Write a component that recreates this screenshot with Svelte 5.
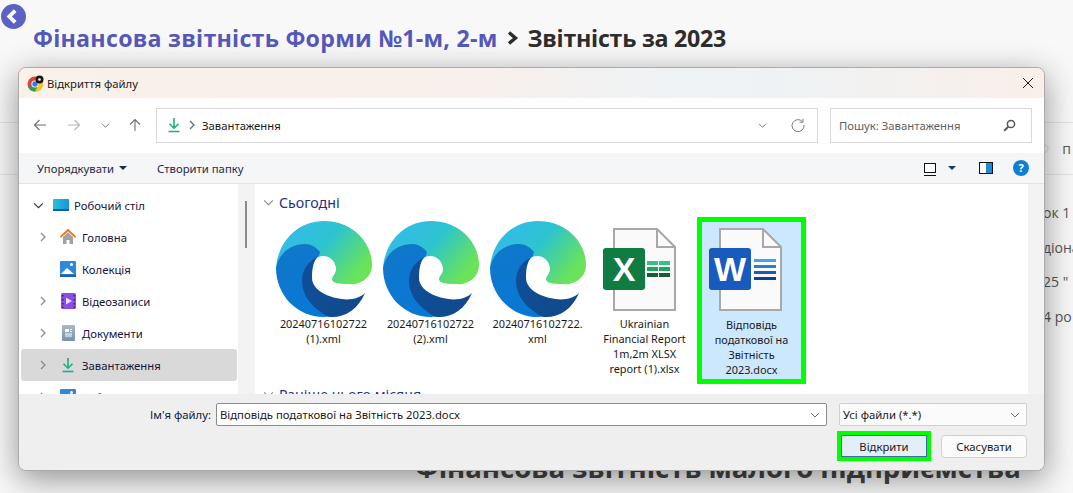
<script lang="ts">
  // Browser page dimmed behind a Windows 11 "open file" dialog.
  const tree = [
    { name: 'Головна', icon: 'home', arrow: true },
    { name: 'Колекція', icon: 'gallery', arrow: false },
    { name: 'Відеозаписи', icon: 'video', arrow: true },
    { name: 'Документи', icon: 'docs', arrow: true },
    { name: 'Завантаження', icon: 'down', arrow: true, selected: true },
    { name: 'Зображення', icon: 'pics', arrow: true },
  ];
  const edgeFiles = [
    ['20240716102722', '(1).xml'],
    ['20240716102722', '(2).xml'],
    ['20240716102722.', 'xml'],
  ];
  const sideText = ['ок 1', 'діона', '25 "', '4 ро'];
</script>

{#snippet chevron(cls)}
  <svg class={cls} width="10" height="10" viewBox="0 0 10 10"><path d="M3 1l4 4-4 4" fill="none" stroke="currentColor" stroke-width="1.3" /></svg>
{/snippet}

{#snippet caretDown(w)}
  <svg width={w} height={w} viewBox="0 0 10 10"><path d="M1 3l4 4 4-4" fill="none" stroke="currentColor" stroke-width="1" /></svg>
{/snippet}

{#snippet downIcon(size)}
  <svg width={size} height={size} viewBox="0 0 16 16"><path d="M8 1v10M3.5 6.8L8 11.2l4.5-4.4" fill="none" stroke="#1fae7c" stroke-width="1.6" /><path d="M2.5 14.5h11" stroke="#19a9a0" stroke-width="1.6" /></svg>
{/snippet}

{#snippet edge()}
  <svg class="bigicon" width="96" height="96" viewBox="0 0 96 96">
    <defs>
      <linearGradient id="eg1" x1="0" y1="0" x2="1" y2="0.55"><stop offset="0" stop-color="#37b8f4" /><stop offset="0.55" stop-color="#2cc4cf" /><stop offset="1" stop-color="#6ae35a" /></linearGradient>
      <linearGradient id="eg2" x1="0.1" y1="0" x2="0.5" y2="1"><stop offset="0" stop-color="#1177c9" /><stop offset="1" stop-color="#0878d6" /></linearGradient>
      <linearGradient id="eg3" x1="0" y1="0" x2="1" y2="0.6"><stop offset="0" stop-color="#0e4f9a" /><stop offset="1" stop-color="#114a8c" /></linearGradient>
    </defs>
    <path d="M0 47C2 20 22 0 48 0c28 0 48 21 48 44 0 12-10 20-26 20H40L0 47z" fill="url(#eg1)" />
    <path d="M0 47c3-16 16-24 29-24 6 0 11 3 15 8L36 60l22 34c-3 1-7 2-10 2C21 96 0 74 0 47z" fill="url(#eg2)" />
    <path d="M42 36C32 40 26 49 26 60c0 13 8 24 20 32 3 2 5 4 10 4 14 0 26-8 33-24H60L36 60l6-24z" fill="url(#eg3)" />
    <path d="M42 36c10-4 18 4 18 12 0 5-4 7-4 10 0 4 6 5 16 5 8 0 14 3 17 9-6 6-17 8-29 5-12-3-24-9-24-21 0-10 2-17 6-20z" fill="#fff" />
  </svg>
{/snippet}

{#snippet sheet()}
  <svg class="sheet" width="63" height="83" viewBox="0 0 63 83">
    <path d="M1 1h43l18 18v63H1z" fill="#fafafa" stroke="#a8a8a8" stroke-width="2" />
    <path d="M44 1v18h18" fill="none" stroke="#a8a8a8" stroke-width="2" />
  </svg>
{/snippet}

<div class="page">
  <button class="back" aria-label="Назад">
    <svg width="15" height="15" viewBox="0 0 14 14"><path d="M9.5 1.5L4 7l5.5 5.5" fill="none" stroke="#fff" stroke-width="3.6" /></svg>
  </button>
  <h1>
    <span class="crumb">Фінансова звітність Форми №1-м, 2-м</span>
    <svg class="gt" width="12" height="14" viewBox="0 0 12 14"><path d="M2 1.500L8.500 7 2 12.500" fill="none" stroke="#2d2d2d" stroke-width="3.400" /></svg>
    <span class="current">Звітність за 2023</span>
  </h1>
  <div class="tabs">
    <svg width="5" height="11" viewBox="0 0 5 11"><path d="M.5.5L4.500 5.500.5 10.500" fill="none" stroke="#d4d4d4" /></svg>
    <span>п</span>
  </div>
  <ul class="aside">
    {#each sideText as t}<li>{t}</li>{/each}
  </ul>
  <h2>Фінансова звітність малого підприємства</h2>

  <div class="dialog">
    <header class="titlebar">
      <svg width="17" height="17" viewBox="0 0 17 17">
        <circle cx="8" cy="9" r="7.5" fill="#db4437" />
        <path d="M8 9L1.2 12C2.5 15 5 16.5 8 16.5L11.5 10z" fill="#2aa24a" />
        <path d="M8 4.5h6.6A7.5 7.5 0 0 1 8 16.5L11.5 10z" fill="#f7c325" />
        <circle cx="8" cy="9" r="3.6" fill="#fff" /><circle cx="8" cy="9" r="2.7" fill="#3b78e7" />
        <circle cx="12.5" cy="4.5" r="4" fill="#1a1a1a" /><circle cx="12.5" cy="4.5" r="1.3" fill="#fff" />
      </svg>
      <span class="wintitle">Відкриття файлу</span>
      <svg class="close" width="12" height="12" viewBox="0 0 12 12"><path d="M1 1l10 10M11 1L1 11" stroke="#1a1a1a" stroke-width="1" /></svg>
    </header>

    <div class="navbar">
      <div class="navbtns">
        <svg width="14" height="14" viewBox="0 0 14 14"><path d="M13 7H1.5M6.5 2L1.5 7l5 5" fill="none" stroke="#6e6e6e" stroke-width="1.1" /></svg>
        <svg width="14" height="14" viewBox="0 0 14 14"><path d="M1 7h11.5M7.5 2l5 5-5 5" fill="none" stroke="#b5b5b5" stroke-width="1.1" /></svg>
        <span class="navcaret">{@render caretDown(9)}</span>
        <svg width="14" height="14" viewBox="0 0 14 14"><path d="M7 13V1.5M2 6.5l5-5 5 5" fill="none" stroke="#6e6e6e" stroke-width="1.1" /></svg>
      </div>
      <div class="address">
        {@render downIcon(16)}
        <span class="crumbgt">{@render chevron('tiny')}</span>
        <span>Завантаження</span>
        <span class="addrright">
          <span class="navcaret">{@render caretDown(9)}</span>
          <svg width="14" height="14" viewBox="0 0 14 14"><path d="M11.5 3.6A6 6 0 1 0 13 7" fill="none" stroke="#7c7c7c" stroke-width="1" /><path d="M12 .8v3.4H8.6" fill="none" stroke="#7c7c7c" stroke-width="1" /></svg>
        </span>
      </div>
      <div class="search">
        <span>Пошук: Завантаження</span>
        <svg width="13" height="13" viewBox="0 0 13 13"><circle cx="8" cy="5" r="3.6" fill="none" stroke="#555" stroke-width="1.5" /><path d="M5.4 7.6L1.2 11.8" stroke="#555" stroke-width="2" /></svg>
      </div>
    </div>

    <div class="toolbar">
      <span class="tool">Упорядкувати <i class="tri"></i></span>
      <span class="tool newfolder">Створити папку</span>
      <span class="toolright">
        <span class="viewbtn"><i class="viewbox"></i><i class="tri navy"></i></span>
        <i class="pane"></i>
        <i class="help">?</i>
      </span>
    </div>

    <div class="body">
      <nav class="tree">
        <div class="row root">
          <span class="arrow dark">{@render caretDown(11)}</span>
          <svg width="16" height="12" viewBox="0 0 16 12"><defs><linearGradient id="dk" x1="0" y1="0" x2="1" y2="0"><stop offset="0" stop-color="#27c3d9" /><stop offset="1" stop-color="#1a93d8" /></linearGradient></defs><rect width="16" height="11" rx="1" fill="url(#dk)" /><rect y="10" width="16" height="2" fill="#0f5fa8" /></svg>
          <span>Робочий стіл</span>
        </div>
        {#each tree as item}
          <div class="row" class:selected={item.selected}>
            <span class="arrow">{#if item.arrow}{@render chevron('chev')}{/if}</span>
            <span class="rowicon">
              {#if item.icon === 'home'}
                <svg width="16" height="16" viewBox="0 0 16 16"><path d="M3 8v7h3.500v-4h3v4H13V8L8 3z" fill="#a3a3a3" /><path d="M.5 8L8 1l7.500 7" fill="none" stroke="#e8771c" stroke-width="1.8" /></svg>
              {:else if item.icon === 'gallery'}
                <svg width="16" height="16" viewBox="0 0 16 16"><rect width="16" height="16" rx="1" fill="#2f88dc" /><path d="M1 13l6-6 7 6z" fill="#fff" /><circle cx="11.500" cy="3.500" r="1.500" fill="#fff" /><path d="M0 13.500h16v2.500H0z" fill="#1c62b4" /></svg>
              {:else if item.icon === 'video'}
                <svg width="15" height="16" viewBox="0 0 15 16"><rect width="15" height="16" rx="1.500" fill="#8b4fe0" /><path d="M5 4.500l6 3.500-6 3.500z" fill="#e9dcff" /><path d="M1 2h1.500v1.500H1zM1 6h1.500v1.500H1zM1 10h1.500v1.500H1zM1 13.500h1.500V15H1zM12.500 2H14v1.500h-1.500zM12.500 6H14v1.500h-1.500zM12.500 10H14v1.500h-1.500zM12.500 13.500H14V15h-1.500z" fill="#3a1f80" /></svg>
              {:else if item.icon === 'docs'}
                <svg width="13" height="16" viewBox="0 0 13 16"><defs><linearGradient id="dc" x1="0" y1="0" x2="0" y2="1"><stop offset="0" stop-color="#aab9cc" /><stop offset="1" stop-color="#7a90ad" /></linearGradient></defs><rect width="13" height="16" rx="1" fill="url(#dc)" /><path d="M3 4h4v3H3zM8 4h2v1H8zM8 6h2v1H8zM3 8.500h7v1H3zM3 10.500h7v1H3z" fill="#fff" /></svg>
              {:else if item.icon === 'down'}
                {@render downIcon(16)}
              {:else}
                <svg width="16" height="16" viewBox="0 0 16 16"><rect width="16" height="16" rx="1" fill="#2f88dc" /><circle cx="11.500" cy="3.500" r="1.500" fill="#fff" /></svg>
              {/if}
            </span>
            <span>{item.name}</span>
          </div>
        {/each}
      </nav>

      <div class="scrolltrack"><i class="thumb"></i></div>

      <main class="files">
        <div class="group"><span class="grp-caret">{@render caretDown(11)}</span>Сьогодні</div>
        <div class="grid">
          {#each edgeFiles as lines}
            <div class="file">
              <div class="thumbbox">{@render edge()}</div>
              <div class="label">{lines[0]}<br />{lines[1]}</div>
            </div>
          {/each}

          <div class="file">
            <div class="thumbbox">
              {@render sheet()}
              <div class="xlines"><i></i><i></i><i></i><i></i><i></i><i></i></div>
              <div class="badge xl">X</div>
            </div>
            <div class="label">Ukrainian<br />Financial Report<br />1m,2m XLSX<br />report (1).xlsx</div>
          </div>

          <div class="file picked">
            <div class="thumbbox">
              {@render sheet()}
              <div class="wlines"><i></i><i></i><i></i><i></i></div>
              <div class="badge wd">W</div>
            </div>
            <div class="label">Відповідь<br />податкової на<br />Звітність<br />2023.docx</div>
          </div>
        </div>
        <div class="group"><span class="grp-caret">{@render caretDown(11)}</span>Раніше цього місяця</div>
      </main>
      <div class="scrolltrack right"></div>
    </div>

    <footer class="bottom">
      <div class="namerow">
        <label for="fname">Ім'я файлу:</label>
        <div class="combo name"><input id="fname" value="Відповідь податкової на Звітність 2023.docx" /><span class="navcaret">{@render caretDown(10)}</span></div>
        <div class="combo filter"><span>Усі файли (*.*)</span><span class="navcaret">{@render caretDown(10)}</span></div>
      </div>
      <div class="btnrow">
        <button class="btn primary">Відкрити</button>
        <button class="btn">Скасувати</button>
      </div>
    </footer>
  </div>
</div>

<style>
  :global(body) { margin: 0; background: #f8f8f8; }

  .page {
    position: relative;
    width: 1073px;
    height: 493px;
    overflow: hidden;
    background: #f8f8f8;
    font-family: "Open Sans", "Noto Sans", sans-serif;
    color: #2b2b2b;
  }

  .back {
    display: flex;
    align-items: center;
    justify-content: center;
    width: 25px;
    height: 25px;
    margin: 4px 0 0 1px;
    padding: 0 2px 0 0;
    border: 0;
    border-radius: 50%;
    background: #5a62c4;
  }

  h1 {
    display: flex;
    align-items: center;
    margin: -8px 0 0 33px;
    height: 34px;
    font-size: 23.200px;
    line-height: 34px;
    font-weight: 700;
    white-space: nowrap;
  }
  .crumb { color: #5558bb; letter-spacing: 0.25px; }
  .gt { margin: 0 8px 0 10px; }
  .current { color: #2d2d2d; letter-spacing: -0.25px; }

  .tabs {
    display: flex;
    justify-content: flex-end;
    align-items: center;
    gap: 13px;
    height: 51px;
    margin-top: 67px;
    padding-right: 2px;
    border-top: 1px solid #e4e4e4;
    border-bottom: 1px solid #e4e4e4;
    font-size: 14px;
    color: #555;
  }

  .aside {
    list-style: none;
    width: 30px;
    margin: 21px 0 0 auto;
    padding: 0;
    font-size: 14px;
    color: #555;
    white-space: nowrap;
  }
  .aside li { height: 34.500px; line-height: 34.500px; }

  h2 {
    margin: 117px 0 0 415px;
    font-size: 27.500px;
    line-height: 34px;
    font-weight: 700;
    color: #444;
    white-space: nowrap;
  }

  /* dialog floats over the page */
  .dialog {
    position: absolute;
    left: 18px;
    top: 67px;
    width: 1027px;
    height: 404px;
    box-sizing: border-box;
    display: flex;
    flex-direction: column;
    overflow: hidden;
    border: 1px solid #ababab;
    border-radius: 8px;
    background: #f0f0f0;
    box-shadow: 0 8px 32px rgba(0, 0, 0, 0.42);
    font-family: "Noto Sans", "Open Sans", sans-serif;
    font-size: 11.300px;
    color: #1a1a1a;
  }

  .titlebar {
    flex: none;
    display: flex;
    align-items: center;
    gap: 3px;
    height: 30px;
    padding: 0 10px 0 8px;
    background: linear-gradient(90deg, #fbf0ea 0%, #f8f0ec 45%, #eef3f6 65%, #f0f2f3 78%, #faefe9 100%);
  }
  .close { margin-left: auto; }

  .navbar {
    flex: none;
    display: flex;
    align-items: center;
    box-sizing: border-box;
    height: 55px;
    padding-bottom: 1px;
    background: #fff;
  }
  .navbtns {
    display: flex;
    align-items: center;
    width: 137px;
    box-sizing: border-box;
    padding-left: 14px;
    gap: 20px;
  }
  .navbtns .navcaret { margin-right: -2px; }
  .navcaret { display: inline-flex; color: #707070; }

  .address {
    display: flex;
    align-items: center;
    gap: 5px;
    box-sizing: border-box;
    width: 662px;
    height: 35px;
    padding: 0 12px 0 9px;
    border: 1px solid #d9d9d9;
  }
  .crumbgt { display: inline-flex; color: #6a6a6a; width: 10px; }
  .addrright { display: flex; align-items: center; gap: 24px; margin-left: auto; }

  .search {
    display: flex;
    align-items: center;
    justify-content: space-between;
    box-sizing: border-box;
    width: 202px;
    height: 35px;
    margin-left: 12px;
    padding: 0 15px 0 8px;
    border: 1px solid #d9d9d9;
    color: #606060;
  }

  .toolbar {
    flex: none;
    display: flex;
    align-items: center;
    height: 30px;
    padding: 0 15px 0 18px;
    background: #f5f6f7;
    border-bottom: 1px solid #e3e3e3;
    color: #1e2a4a;
  }
  .tool { display: inline-flex; align-items: center; gap: 5px; }
  .newfolder { margin-left: 30px; }
  .tri {
    display: inline-block;
    width: 0;
    height: 0;
    border-left: 4px solid transparent;
    border-right: 4px solid transparent;
    border-top: 4px solid #1e2a4a;
  }
  .toolright { display: flex; align-items: center; margin-left: auto; }
  .viewbtn { display: flex; align-items: center; gap: 12px; margin-right: 23px; }
  .viewbox {
    display: block;
    width: 10px;
    height: 8px;
    border: 1px solid #111;
    box-shadow: 0 2px 0 0 #f5f6f7, 0 3px 0 0 #111;
    background: #fff;
  }
  .tri.navy { border-top-color: #1c3a6e; }
  .pane {
    display: block;
    width: 12px;
    height: 10px;
    border: 1px solid #111;
    background: linear-gradient(90deg, #fff 50%, #1e8ad8 50%);
  }
  .help {
    display: block;
    width: 16px;
    height: 16px;
    margin-left: 20px;
    border-radius: 50%;
    background: #0f7fd6;
    color: #fff;
    font: 700 11px/16px "Noto Sans", sans-serif;
    text-align: center;
  }

  .body {
    flex: 1;
    min-height: 0;
    display: flex;
    overflow: hidden;
    background: #fff;
  }

  .tree {
    flex: none;
    width: 219px;
    box-sizing: border-box;
    padding: 5px 1px 0 2px;
    overflow: hidden;
  }
  .row {
    display: flex;
    align-items: center;
    height: 32px;
    border-radius: 3px;
    color: #14143c;
  }
  .row.selected { background: #d9d9d9; }
  .root { gap: 5px; padding-left: 10px; }
  .root .arrow { width: 15px; margin-left: 0; margin-right: 2px; }
  .arrow {
    display: inline-flex;
    justify-content: center;
    flex: none;
    width: 20px;
    margin-left: 12px;
    color: #8a8a8a;
  }
  .arrow.dark { color: #333; }
  .rowicon {
    display: inline-flex;
    justify-content: center;
    width: 18px;
    margin: 0 5px 0 6px;
  }

  .scrolltrack {
    flex: none;
    width: 17px;
    background: #f3f3f3;
    padding-top: 17px;
    box-sizing: border-box;
  }
  .scrolltrack.right { width: 16px; }
  .thumb {
    display: block;
    width: 2px;
    height: 47px;
    margin-left: 7px;
    background: #8a8a8a;
  }

  .files {
    flex: 1;
    min-width: 0;
    padding: 8px 0 0 8px;
    overflow: hidden;
  }
  .group {
    display: flex;
    align-items: center;
    gap: 5px;
    height: 20px;
    font-size: 14.200px;
    color: #1e3287;
  }
  .grp-caret { display: inline-flex; color: #8a8a8a; }

  .grid {
    display: grid;
    grid-template-columns: repeat(5, 107px);
    height: 163px;
    align-items: start;
    margin: 9px 0 0 7px;
  }
  .file {
    box-sizing: border-box;
    height: 167px;
    text-align: center;
  }
  .thumbbox {
    position: relative;
    display: flex;
    justify-content: center;
    height: 96px;
  }
  .bigicon { display: block; }
  .label {
    margin-top: -1px;
    font-size: 10.900px;
    line-height: 15px;
    white-space: nowrap;
  }

  .file.picked {
    border: 5px solid #00ff00;
    background: #cce8ff;
    margin: -4px 0 0 -1px;
    width: 109px;
  }

  .sheet { position: absolute; left: 22px; top: 7px; }
  .picked .sheet { left: 17px; top: 6px; }
  .badge {
    position: absolute;
    left: 12px;
    top: 27px;
    width: 42px;
    height: 42px;
    border-radius: 3px;
    color: #fff;
    font: 700 34px/42px "Liberation Sans", sans-serif;
    text-align: center;
  }
  .badge.xl { background: #107c41; }
  .badge.wd { background: #185abd; left: 7px; top: 26px; }

  .xlines {
    position: absolute;
    left: 56px;
    top: 40px;
    display: grid;
    grid-template-columns: 11px 11px;
    gap: 2px 1px;
  }
  .xlines i { display: block; height: 4px; }
  .xlines i:nth-child(1), .xlines i:nth-child(2) { background: #33c481; }
  .xlines i:nth-child(3), .xlines i:nth-child(4) { background: #21a366; }
  .xlines i:nth-child(5), .xlines i:nth-child(6) { background: #185c37; }

  .wlines {
    position: absolute;
    left: 52px;
    top: 37px;
    display: flex;
    flex-direction: column;
    gap: 3px;
    width: 22px;
  }
  .wlines i { display: block; height: 3px; }
  .wlines i:nth-child(1) { background: #41a5ee; }
  .wlines i:nth-child(2) { background: #2b7cd3; }
  .wlines i:nth-child(3) { background: #185abd; }
  .wlines i:nth-child(4) { background: #103f91; }

  .bottom {
    flex: none;
    box-sizing: border-box;
    height: 76px;
    padding: 9px 17px 0 0;
    background: #efefef;
  }
  .namerow { display: flex; align-items: center; }
  label { width: 192px; text-align: right; margin-right: 5px; color: #14143c; }
  .combo {
    display: flex;
    align-items: center;
    box-sizing: border-box;
    height: 23px;
    background: #fff;
    padding: 0 6px 0 3px;
  }
  .combo.name { width: 611px; border: 1px solid #8c8c8c; border-radius: 2px; }
  .combo.filter {
    width: 188px;
    margin-left: 12px;
    justify-content: space-between;
    border: 1px solid #d0d0d0;
    border-radius: 2px;
    background: #fbfbfb;
  }
  input {
    flex: 1;
    min-width: 0;
    padding: 0;
    border: 0;
    outline: 0;
    background: transparent;
    font: inherit;
    color: inherit;
  }

  .btnrow {
    display: flex;
    justify-content: flex-end;
    align-items: center;
    gap: 10px;
    margin-top: 5px;
  }
  .btn {
    box-sizing: border-box;
    width: 86px;
    height: 23px;
    padding: 0;
    border: 1px solid #d0d0d0;
    border-radius: 4px;
    background: #fbfbfb;
    font: inherit;
    color: inherit;
  }
  .btn.primary {
    width: 94px;
    height: 30px;
    border: 4px solid #00ff00;
    border-radius: 0;
    background: #e3eef8;
    box-shadow: inset 0 0 0 1px #3a6ea5;
  }
</style>
